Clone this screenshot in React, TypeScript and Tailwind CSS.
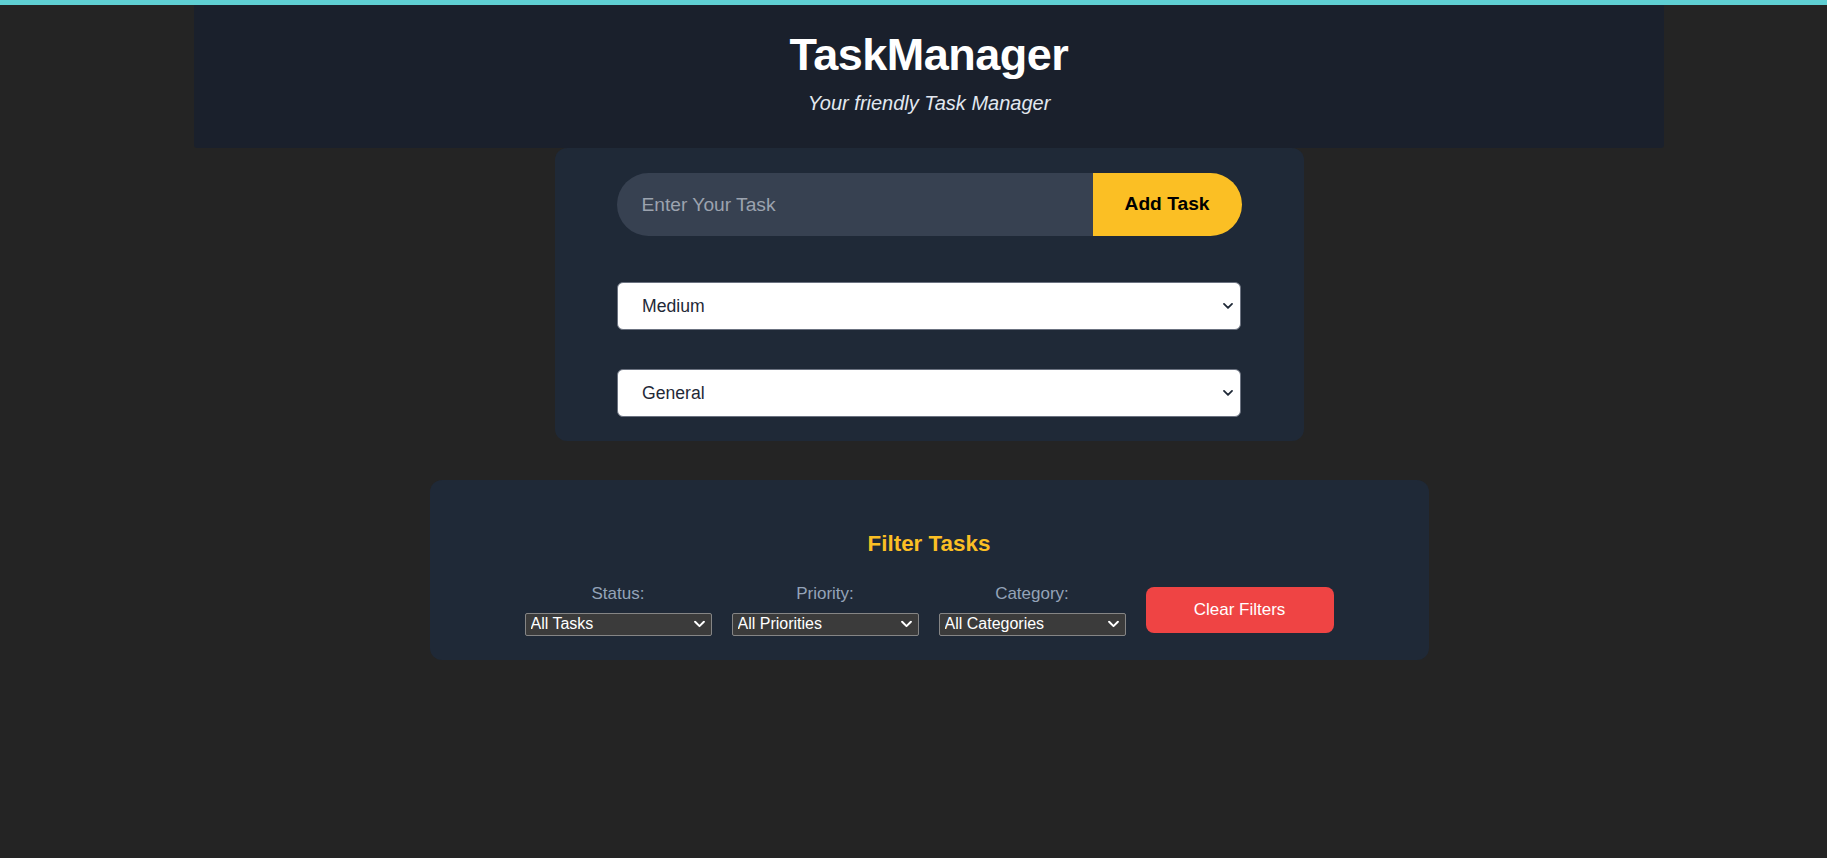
import React, { useState } from "react";

const FILTERS = [
  { id: "status", label: "Status:", options: ["All Tasks", "Completed", "Pending"] },
  { id: "priority", label: "Priority:", options: ["All Priorities", "High", "Medium", "Low"] },
  { id: "category", label: "Category:", options: ["All Categories", "General", "Work", "Personal"] },
];

function Chevron({ color, w = 10 }: { color: string; w?: number }) {
  return (
    <svg width={w} height={w * 0.65} viewBox="0 0 10 6.5" fill="none">
      <path d="M1 1.2 L5 5.2 L9 1.2" stroke={color} strokeWidth="1.8" strokeLinecap="round" strokeLinejoin="round" />
    </svg>
  );
}

export default function App() {
  const [task, setTask] = useState("");
  const [priority, setPriority] = useState("Medium");
  const [category, setCategory] = useState("General");

  return (
    <div className="min-h-[858px] bg-[#242424] font-['Liberation_Sans',Arial,sans-serif]">
      {/* Top accent */}
      <div className="h-[5px] bg-[#5fcfd3]" />

      <div className="pl-[31px] flex flex-col items-center">
        {/* Header */}
        <header className="w-[1470px] bg-[#1a202c] rounded-b-[3px] text-center pt-[27px] pb-[35px]">
          <h1 className="text-[45px] leading-[45px] font-bold text-white tracking-[-0.5px]">TaskManager</h1>
          <p className="mt-[16px] text-[20px] leading-[20px] italic text-[#e2e8f0]">Your friendly Task Manager</p>
        </header>

        {/* Add task card */}
        <div className="w-[749px] bg-[#1f2937] rounded-[12px] pt-[25px] pb-[24px] flex flex-col items-center">
          <div className="flex w-[625px] h-[63px]">
            <input
              value={task}
              onChange={e => setTask(e.target.value)}
              placeholder="Enter Your Task"
              className="flex-1 min-w-0 h-full rounded-l-full bg-[#374151] pl-[25px] text-[19.2px] text-white placeholder:text-[#9ca3af] outline-none"
            />
            <button className="w-[149px] h-full rounded-r-full bg-[#fbbf24] text-black font-bold text-[19.2px]">Add Task</button>
          </div>

          <div className="relative mt-[46px] w-[624px]">
            <select
              value={priority}
              onChange={e => setPriority(e.target.value)}
              className="appearance-none w-full h-[48px] rounded-[6px] border border-[#6b7280] bg-white pl-[24px] text-[17.6px] text-[#1f2937] outline-none"
            >
              <option>High</option>
              <option>Medium</option>
              <option>Low</option>
            </select>
            <span className="pointer-events-none absolute right-[8px] top-1/2 -translate-y-1/2 flex">
              <Chevron color="#1f2937" />
            </span>
          </div>

          <div className="relative mt-[39px] w-[624px]">
            <select
              value={category}
              onChange={e => setCategory(e.target.value)}
              className="appearance-none w-full h-[48px] rounded-[6px] border border-[#6b7280] bg-white pl-[24px] text-[17.6px] text-[#1f2937] outline-none"
            >
              <option>General</option>
              <option>Work</option>
              <option>Personal</option>
            </select>
            <span className="pointer-events-none absolute right-[8px] top-1/2 -translate-y-1/2 flex">
              <Chevron color="#1f2937" />
            </span>
          </div>
        </div>

        {/* Filter card */}
        <div className="mt-[39px] w-[999px] bg-[#1f2937] rounded-[12px] pt-[51px] pb-[24px] flex flex-col items-center">
          <h2 className="text-[22.4px] leading-[26px] font-bold text-[#fbbf24]">Filter Tasks</h2>
          <div className="mt-[27px] flex items-center gap-[20px]">
            {FILTERS.map(f => (
              <div key={f.id} className="w-[187px] flex flex-col items-center">
                <label className="text-[17px] leading-[20px] text-[#94a3b8] mb-[8px]">{f.label}</label>
                <div className="relative w-full">
                  <select className="appearance-none w-full h-[23px] rounded-[2px] border border-[#858585] bg-[#3b3b3b] pl-[5px] text-[16px] leading-[20px] text-white outline-none">
                    {f.options.map(o => <option key={o}>{o}</option>)}
                  </select>
                  <span className="pointer-events-none absolute right-[7px] top-1/2 -translate-y-1/2 flex">
                    <Chevron color="#ffffff" w={11} />
                  </span>
                </div>
              </div>
            ))}
            <button className="w-[188px] h-[46px] rounded-[8px] bg-[#ef4444] text-white text-[17px]">Clear Filters</button>
          </div>
        </div>
      </div>
    </div>
  );
}
